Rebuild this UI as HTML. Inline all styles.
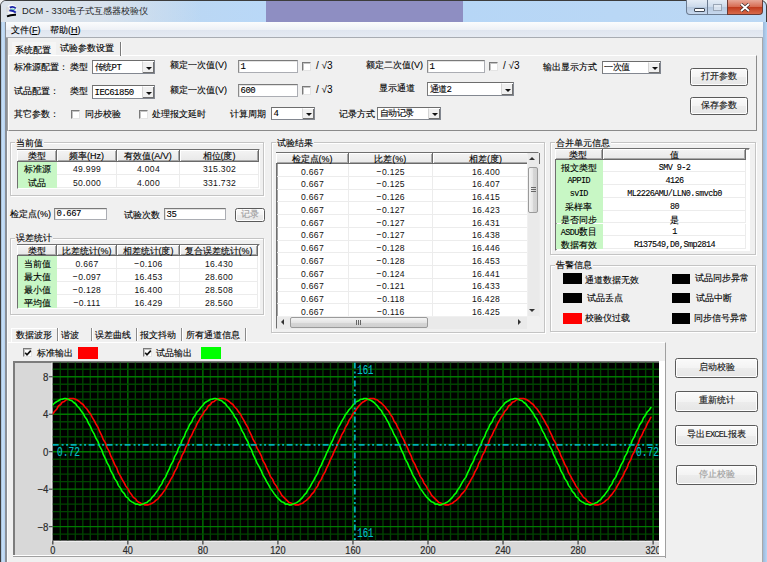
<!DOCTYPE html><html><head><meta charset="utf-8"><style>
*{box-sizing:border-box}
html,body{margin:0;padding:0}
body{width:767px;height:562px;overflow:hidden;position:relative;background:#f0f0f0;font-family:"Liberation Sans",sans-serif;color:#111}
.t{position:absolute;font-size:9px;line-height:10px;margin-top:-5px;white-space:nowrap;color:#000;-webkit-text-stroke:0.12px #000}
.n{position:absolute;font-family:"Liberation Sans",sans-serif;font-size:8.6px;line-height:10px;margin-top:-5px;white-space:nowrap;letter-spacing:0.3px;transform:scaleY(1.15);color:#111}
.m{position:absolute;font-family:"Liberation Mono",sans-serif;font-size:8.5px;line-height:10px;margin-top:-5px;white-space:nowrap;letter-spacing:-0.6px;transform:scaleY(1.15);color:#000;-webkit-text-stroke:0.1px #000}
.m b{font-weight:normal;font-family:"Liberation Sans",sans-serif;font-size:9px;letter-spacing:0}
.edit{position:absolute;background:#fff;border:1px solid #abadb3;border-top-color:#7a7a7a;border-left-color:#8a8a8a;box-shadow:inset 1px 1px 0 #e3e3e3}
.edit span,.combo span{position:absolute;left:1.5px;top:50%;margin-top:-4.5px;font-size:9px;line-height:10px;white-space:nowrap;color:#000;font-family:"Liberation Mono","Liberation Sans",sans-serif;letter-spacing:-0.5px;-webkit-text-stroke:0.1px #000}
.combo{position:absolute;background:#fff;border:1px solid #828790;border-top-color:#6d6d6d;border-left-color:#7a7a7a}
.combo i{position:absolute;right:0;top:0;bottom:0;width:12px;background:#f0f0f0;border-left:1px solid #d4d4d4;border-top:1px solid #fff;box-shadow:inset -1px -1px 0 #707070}
.combo i:after{content:"";position:absolute;left:3px;top:50%;margin-top:-1px;border-left:3px solid transparent;border-right:3px solid transparent;border-top:3px solid #111}
.chk{position:absolute;width:9px;height:9px;background:#fff;border:1px solid #e4e4e4;border-top-color:#7a7a7a;border-left-color:#7a7a7a;box-shadow:inset 1px 1px 0 #c4c4c4}
.chk svg{position:absolute;left:0;top:0}
.btn{position:absolute;text-align:center;font-size:9px;border:1px solid #5a5a5a;border-radius:2.5px;background:linear-gradient(#fafafa,#f3f3f3 50%,#ececec 51%,#e6e6e6);box-shadow:inset 0 0 0 1px #fdfdfd;-webkit-text-stroke:0.15px currentColor}
.btn tt{font-family:'Liberation Mono',monospace;font-size:8.5px;letter-spacing:-0.7px}
.grp{position:absolute;border:1px solid #d5dfe5;border-color:#c0c0c0 #fff #fff #c0c0c0;box-shadow:1px 1px 0 #c0c0c0 inset, -1px -1px 0 #c0c0c0 inset;}
.gt{background:#f0f0f0}

.hc{position:absolute;background:linear-gradient(#f4f4f4,#e8e8e8);border-right:1px solid #6a6a6a;border-bottom:1px solid #6a6a6a;box-shadow:inset 1px 1px 0 #fff,inset -1px -1px 0 #a8a8a8}
.hc span{position:absolute;left:0;right:0;top:50%;margin-top:-4px;text-align:center;font-size:9px;line-height:10px;white-space:nowrap;color:#000;-webkit-text-stroke:0.12px #000}
</style></head><body><div style="position:absolute;left:0;top:0;width:767px;height:600px;border-radius:6px 6px 0 0;background:linear-gradient(90deg,#c9d9ea 0px,#bcd6f0 120px,#b9d8f7 265px,#8e8ec2 265px,#8e8ec2 462px,#b6d6f6 462px,#bcd8f4 767px);border:1px solid #3c3c3c"></div>
<div style="position:absolute;left:1px;top:1px;width:200px;height:21px;border-radius:5px 0 0 0;background:linear-gradient(90deg,#dde3ea,#d8e2ec 50%,rgba(200,220,240,0))"></div>
<div style="position:absolute;left:1px;top:22px;width:4px;height:540px;background:linear-gradient(90deg,#9fb8d2,#c7e0f8 40%,#b4d0ee)"></div>
<div style="position:absolute;left:5px;top:22px;width:2px;height:540px;background:#8a8f96"></div>
<div style="position:absolute;left:763px;top:22px;width:4px;height:540px;background:linear-gradient(90deg,#9cb8d8,#b8d6f6)"></div>
<div style="position:absolute;left:762px;top:22px;width:1px;height:540px;background:#8a8f96"></div>
<svg style="position:absolute;left:0px;top:0px" width="18" height="18" viewBox="0 0 18 18"><ellipse cx="11.5" cy="9.5" rx="5.2" ry="5" fill="#fafafa"/><ellipse cx="7.5" cy="9.5" rx="1.5" ry="3" fill="#c8c8c8" opacity=".6"/><path d="M9.8 7.6 Q13 5.8 15.8 8.4" stroke="#1a24a8" stroke-width="1.9" fill="none"/><path d="M10.5 9.2 Q13 8.6 15.5 10" stroke="#40b8a8" stroke-width="0.9" fill="none"/><path d="M9.3 10.6 Q12.5 10 15.8 12.4" stroke="#1a24a8" stroke-width="1.9" fill="none"/><path d="M7 16.4 Q11 14.6 16 14.8" stroke="#000" stroke-width="1.9" fill="none"/></svg>
<div style="position:absolute;left:22px;top:4px;font-size:9.35px;line-height:14px;color:#1e1e1e;white-space:nowrap;letter-spacing:0px">DCM - 330电子式互感器校验仪</div>
<div style="position:absolute;left:686px;top:0px;width:42px;height:15px;border:1px solid #6b7b90;border-top:none;border-radius:0 0 0 4px;background:linear-gradient(#e4ecf6,#cbd9ea 50%,#b6c8de 51%,#c6d8ee)"></div>
<div style="position:absolute;left:707px;top:0px;width:1px;height:15px;background:#6b7b90"></div>
<div style="position:absolute;left:694px;top:8px;width:11px;height:4px;border:1px solid #404a58;background:#fff;border-radius:1px"></div>
<div style="position:absolute;left:713px;top:4px;width:9px;height:7px;border:1px solid #9aa6b6;background:rgba(255,255,255,.4)"></div>
<div style="position:absolute;left:727px;top:0px;width:36px;height:15px;border:1px solid #6a3a34;border-top:none;border-radius:0 0 4px 0;background:linear-gradient(#e8a898,#d66a50 50%,#c03a1c 51%,#d86a4a)"></div>
<svg style="position:absolute;left:739px;top:3px" width="12" height="9" viewBox="0 0 12 9"><path d="M2 1 L10 8 M10 1 L2 8" stroke="#3a2a2a" stroke-width="3.2"/><path d="M2 1 L10 8 M10 1 L2 8" stroke="#fff" stroke-width="1.8"/></svg>
<div style="position:absolute;left:7px;top:22px;width:756px;height:545px;background:#f0f0f0;border-left:1px solid #fafafa;border-right:1px solid #a8a8a8"></div>
<div style="position:absolute;left:6px;top:22px;width:757px;height:16px;background:linear-gradient(#fbfcfd,#eef1f6 50%,#dfe5ef 51%,#e6ebf3);border-bottom:1px solid #a8acb2"></div>
<div class="t" style="left:11px;top:30px">文件(<u>F</u>)</div>
<div class="t" style="left:50px;top:30px">帮助(<u>H</u>)</div>
<div style="position:absolute;left:8px;top:55px;width:749px;height:76px;border-top:1px solid #fff;border-left:1px solid #fff;border-right:1px solid #8a8a8a;border-bottom:1px solid #8a8a8a"></div>
<div style="position:absolute;left:7px;top:38px;width:1px;height:93px;background:#a0a0a0"></div>
<div style="position:absolute;left:12px;top:42px;width:44px;height:13px;background:#f5f5f5"></div>
<div class="t" style="left:15px;top:50px">系统配置</div>
<div style="position:absolute;left:120px;top:42px;width:2px;height:14px;border-left:1px solid #7a7a7a;border-right:1px solid #fff"></div>
<div class="t" style="left:60px;top:48px">试验参数设置</div>
<div class="t" style="left:14px;top:66.5px;">标准源配置：</div>
<div class="t" style="left:70px;top:66.5px;">类型</div>
<div class="combo" style="left:92px;top:60px;width:63px;height:14px"><span>传统PT</span><i></i></div>
<div class="t" style="left:170px;top:65px;">额定一次值(V)</div>
<div class="edit" style="left:238px;top:60px;width:60px;height:13px"><span>1</span></div>
<div class="chk" style="left:302px;top:62px"></div>
<div class="t" style="left:316px;top:66px;font-size:10px;-webkit-text-stroke:0">/ √3</div>
<div class="t" style="left:366px;top:64.5px;">额定二次值(V)</div>
<div class="edit" style="left:427px;top:60px;width:58px;height:12.5px"><span>1</span></div>
<div class="chk" style="left:489px;top:62px"></div>
<div class="t" style="left:503px;top:66px;font-size:10px;-webkit-text-stroke:0">/ √3</div>
<div class="t" style="left:543px;top:67px;">输出显示方式</div>
<div class="combo" style="left:601.5px;top:60.5px;width:59.5px;height:13.0px"><span>一次值</span><i></i></div>
<div class="btn" style="left:689.5px;top:68px;width:58.5px;height:18px;color:#1a1a1a;line-height:15px">打开参数</div>
<div class="btn" style="left:689.5px;top:97px;width:58.5px;height:18px;color:#1a1a1a;line-height:15px">保存参数</div>
<div class="t" style="left:14px;top:91px;">试品配置：</div>
<div class="t" style="left:70px;top:91px;">类型</div>
<div class="combo" style="left:92px;top:85px;width:63px;height:14px"><span>IEC61850</span><i></i></div>
<div class="t" style="left:170px;top:89.5px;">额定一次值(V)</div>
<div class="edit" style="left:238px;top:84px;width:60px;height:13px"><span>600</span></div>
<div class="chk" style="left:302px;top:86px"></div>
<div class="t" style="left:316px;top:90px;font-size:10px;-webkit-text-stroke:0">/ √3</div>
<div class="t" style="left:379px;top:87.5px;">显示通道</div>
<div class="combo" style="left:427px;top:82px;width:87px;height:14px"><span>通道2</span><i></i></div>
<div class="t" style="left:14px;top:113.5px;">其它参数：</div>
<div class="chk" style="left:71px;top:109.5px"></div>
<div class="t" style="left:84.5px;top:114px;">同步校验</div>
<div class="chk" style="left:139px;top:109.5px"></div>
<div class="t" style="left:152px;top:114px;">处理报文延时</div>
<div class="t" style="left:230px;top:114px;">计算周期</div>
<div class="combo" style="left:271px;top:107px;width:44px;height:13px"><span>4</span><i></i></div>
<div class="t" style="left:339px;top:113.5px;">记录方式</div>
<div class="combo" style="left:377px;top:106.5px;width:64px;height:13.5px"><span>自动记录</span><i></i></div>
<div style="position:absolute;left:11px;top:143px;width:254px;height:53.5px;border:1px solid #fff"></div>
<div style="position:absolute;left:10px;top:142px;width:254px;height:53.5px;border:1px solid #c4c4c4"></div>
<div class="t" style="left:15px;top:142.5px;padding:0 1px;background:#f0f0f0">当前值</div>
<div style="position:absolute;left:17px;top:149px;width:243px;height:40px;background:#fff;border:1px solid #fff;border-left-color:#6f6f6f;border-top-color:#6f6f6f;box-shadow:inset 1px 1px 0 #a0a0a0"></div>
<div class="hc" style="left:17px;top:150px;width:40px;height:11.5px"><span>类型</span></div>
<div class="hc" style="left:57px;top:150px;width:60px;height:11.5px"><span>频率(Hz)</span></div>
<div class="hc" style="left:117px;top:150px;width:63px;height:11.5px"><span>有效值(A/V)</span></div>
<div class="hc" style="left:180px;top:150px;width:79px;height:11.5px"><span>相位(度)</span></div>
<div style="position:absolute;left:18px;top:161.5px;width:39px;height:13.2px;background:#c8f7c5"></div>
<div style="position:absolute;left:57px;top:161.5px;width:60px;height:13.2px;border-right:1px solid #ececec;border-bottom:1px solid #ececec"></div>
<div style="position:absolute;left:117px;top:161.5px;width:63px;height:13.2px;border-right:1px solid #ececec;border-bottom:1px solid #ececec"></div>
<div style="position:absolute;left:180px;top:161.5px;width:79px;height:13.2px;border-right:1px solid #ececec;border-bottom:1px solid #ececec"></div>
<div class="t" style="left:17px;top:169.4px;width:40px;text-align:center;">标准源</div>
<div class="n" style="left:57px;top:169.4px;width:60px;text-align:center;">49.999</div>
<div class="n" style="left:117px;top:169.4px;width:63px;text-align:center;">4.004</div>
<div class="n" style="left:180px;top:169.4px;width:79px;text-align:center;">315.302</div>
<div style="position:absolute;left:18px;top:174.7px;width:39px;height:13.2px;background:#c8f7c5"></div>
<div style="position:absolute;left:57px;top:174.7px;width:60px;height:13.2px;border-right:1px solid #ececec;border-bottom:1px solid #ececec"></div>
<div style="position:absolute;left:117px;top:174.7px;width:63px;height:13.2px;border-right:1px solid #ececec;border-bottom:1px solid #ececec"></div>
<div style="position:absolute;left:180px;top:174.7px;width:79px;height:13.2px;border-right:1px solid #ececec;border-bottom:1px solid #ececec"></div>
<div class="t" style="left:17px;top:182.6px;width:40px;text-align:center;">试品</div>
<div class="n" style="left:57px;top:182.6px;width:60px;text-align:center;">50.000</div>
<div class="n" style="left:117px;top:182.6px;width:63px;text-align:center;">4.000</div>
<div class="n" style="left:180px;top:182.6px;width:79px;text-align:center;">331.732</div>
<div class="t" style="left:10px;top:213.5px;">检定点(%)</div>
<div class="edit" style="left:54px;top:207.5px;width:53px;height:12.0px"><span>0.667</span></div>
<div class="t" style="left:124px;top:214.5px;">试验次数</div>
<div class="edit" style="left:164px;top:208px;width:61.5px;height:12px"><span>35</span></div>
<div class="btn" style="left:234.5px;top:207.5px;width:30.5px;height:14.5px;color:#a0a0a0;line-height:11.5px">记录</div>
<div style="position:absolute;left:11px;top:238.5px;width:254px;height:77.0px;border:1px solid #fff"></div>
<div style="position:absolute;left:10px;top:237.5px;width:254px;height:77.0px;border:1px solid #c4c4c4"></div>
<div class="t" style="left:15px;top:238.0px;padding:0 1px;background:#f0f0f0">误差统计</div>
<div style="position:absolute;left:17px;top:244px;width:243px;height:65px;background:#fff;border:1px solid #fff;border-left-color:#6f6f6f;border-top-color:#6f6f6f;box-shadow:inset 1px 1px 0 #a0a0a0"></div>
<div class="hc" style="left:17px;top:245px;width:40px;height:11px"><span>类型</span></div>
<div class="hc" style="left:57px;top:245px;width:60px;height:11px"><span>比差统计(%)</span></div>
<div class="hc" style="left:117px;top:245px;width:63px;height:11px"><span>相差统计(度)</span></div>
<div class="hc" style="left:180px;top:245px;width:78px;height:11px"><span>复合误差统计(%)</span></div>
<div style="position:absolute;left:18px;top:256px;width:39px;height:13px;background:#c8f7c5"></div>
<div style="position:absolute;left:57px;top:256px;width:60px;height:13px;border-right:1px solid #ececec;border-bottom:1px solid #ececec"></div>
<div style="position:absolute;left:117px;top:256px;width:63px;height:13px;border-right:1px solid #ececec;border-bottom:1px solid #ececec"></div>
<div style="position:absolute;left:180px;top:256px;width:78px;height:13px;border-right:1px solid #ececec;border-bottom:1px solid #ececec"></div>
<div class="t" style="left:17px;top:263.8px;width:40px;text-align:center;">当前值</div>
<div class="n" style="left:57px;top:263.8px;width:60px;text-align:center;">0.667</div>
<div class="n" style="left:117px;top:263.8px;width:63px;text-align:center;">−0.106</div>
<div class="n" style="left:180px;top:263.8px;width:78px;text-align:center;">16.430</div>
<div style="position:absolute;left:18px;top:269px;width:39px;height:13px;background:#c8f7c5"></div>
<div style="position:absolute;left:57px;top:269px;width:60px;height:13px;border-right:1px solid #ececec;border-bottom:1px solid #ececec"></div>
<div style="position:absolute;left:117px;top:269px;width:63px;height:13px;border-right:1px solid #ececec;border-bottom:1px solid #ececec"></div>
<div style="position:absolute;left:180px;top:269px;width:78px;height:13px;border-right:1px solid #ececec;border-bottom:1px solid #ececec"></div>
<div class="t" style="left:17px;top:276.8px;width:40px;text-align:center;">最大值</div>
<div class="n" style="left:57px;top:276.8px;width:60px;text-align:center;">−0.097</div>
<div class="n" style="left:117px;top:276.8px;width:63px;text-align:center;">16.453</div>
<div class="n" style="left:180px;top:276.8px;width:78px;text-align:center;">28.600</div>
<div style="position:absolute;left:18px;top:282px;width:39px;height:13px;background:#c8f7c5"></div>
<div style="position:absolute;left:57px;top:282px;width:60px;height:13px;border-right:1px solid #ececec;border-bottom:1px solid #ececec"></div>
<div style="position:absolute;left:117px;top:282px;width:63px;height:13px;border-right:1px solid #ececec;border-bottom:1px solid #ececec"></div>
<div style="position:absolute;left:180px;top:282px;width:78px;height:13px;border-right:1px solid #ececec;border-bottom:1px solid #ececec"></div>
<div class="t" style="left:17px;top:289.8px;width:40px;text-align:center;">最小值</div>
<div class="n" style="left:57px;top:289.8px;width:60px;text-align:center;">−0.128</div>
<div class="n" style="left:117px;top:289.8px;width:63px;text-align:center;">16.400</div>
<div class="n" style="left:180px;top:289.8px;width:78px;text-align:center;">28.508</div>
<div style="position:absolute;left:18px;top:295px;width:39px;height:13px;background:#c8f7c5"></div>
<div style="position:absolute;left:57px;top:295px;width:60px;height:13px;border-right:1px solid #ececec;border-bottom:1px solid #ececec"></div>
<div style="position:absolute;left:117px;top:295px;width:63px;height:13px;border-right:1px solid #ececec;border-bottom:1px solid #ececec"></div>
<div style="position:absolute;left:180px;top:295px;width:78px;height:13px;border-right:1px solid #ececec;border-bottom:1px solid #ececec"></div>
<div class="t" style="left:17px;top:302.8px;width:40px;text-align:center;">平均值</div>
<div class="n" style="left:57px;top:302.8px;width:60px;text-align:center;">−0.111</div>
<div class="n" style="left:117px;top:302.8px;width:63px;text-align:center;">16.429</div>
<div class="n" style="left:180px;top:302.8px;width:78px;text-align:center;">28.560</div>
<div style="position:absolute;left:271.5px;top:143px;width:274.0px;height:190.5px;border:1px solid #fff"></div>
<div style="position:absolute;left:270.5px;top:142px;width:274.0px;height:190.5px;border:1px solid #c4c4c4"></div>
<div class="t" style="left:275.5px;top:142.5px;padding:0 1px;background:#f0f0f0">试验结果</div>
<div style="position:absolute;left:276px;top:151.5px;width:263px;height:177.5px;background:#fff;border:1px solid #fff;border-left-color:#6f6f6f;border-top-color:#6f6f6f;box-shadow:inset 1px 1px 0 #a0a0a0"></div>
<div class="hc" style="left:276px;top:152.5px;width:73px;height:11.5px"><span>检定点(%)</span></div>
<div class="hc" style="left:349px;top:152.5px;width:83.5px;height:11.5px"><span>比差(%)</span></div>
<div class="hc" style="left:432.5px;top:152.5px;width:107.0px;height:11.5px"><span>相差(度)</span></div>
<div style="position:absolute;left:277px;top:164.0px;width:72px;height:12.75px;border-right:1px solid #ececec;border-bottom:1px solid #ececec"></div>
<div style="position:absolute;left:349px;top:164.0px;width:83.5px;height:12.75px;border-right:1px solid #ececec;border-bottom:1px solid #ececec"></div>
<div style="position:absolute;left:432.5px;top:164.0px;width:107.0px;height:12.75px;border-right:1px solid #ececec;border-bottom:1px solid #ececec"></div>
<div class="n" style="left:276px;top:171.675px;width:73px;text-align:center;">0.667</div>
<div class="n" style="left:349px;top:171.675px;width:83.5px;text-align:center;">−0.125</div>
<div class="n" style="left:432.5px;top:171.675px;width:107.0px;text-align:center;">16.400</div>
<div style="position:absolute;left:277px;top:176.75px;width:72px;height:12.75px;border-right:1px solid #ececec;border-bottom:1px solid #ececec"></div>
<div style="position:absolute;left:349px;top:176.75px;width:83.5px;height:12.75px;border-right:1px solid #ececec;border-bottom:1px solid #ececec"></div>
<div style="position:absolute;left:432.5px;top:176.75px;width:107.0px;height:12.75px;border-right:1px solid #ececec;border-bottom:1px solid #ececec"></div>
<div class="n" style="left:276px;top:184.425px;width:73px;text-align:center;">0.667</div>
<div class="n" style="left:349px;top:184.425px;width:83.5px;text-align:center;">−0.125</div>
<div class="n" style="left:432.5px;top:184.425px;width:107.0px;text-align:center;">16.407</div>
<div style="position:absolute;left:277px;top:189.5px;width:72px;height:12.75px;border-right:1px solid #ececec;border-bottom:1px solid #ececec"></div>
<div style="position:absolute;left:349px;top:189.5px;width:83.5px;height:12.75px;border-right:1px solid #ececec;border-bottom:1px solid #ececec"></div>
<div style="position:absolute;left:432.5px;top:189.5px;width:107.0px;height:12.75px;border-right:1px solid #ececec;border-bottom:1px solid #ececec"></div>
<div class="n" style="left:276px;top:197.175px;width:73px;text-align:center;">0.667</div>
<div class="n" style="left:349px;top:197.175px;width:83.5px;text-align:center;">−0.126</div>
<div class="n" style="left:432.5px;top:197.175px;width:107.0px;text-align:center;">16.415</div>
<div style="position:absolute;left:277px;top:202.25px;width:72px;height:12.75px;border-right:1px solid #ececec;border-bottom:1px solid #ececec"></div>
<div style="position:absolute;left:349px;top:202.25px;width:83.5px;height:12.75px;border-right:1px solid #ececec;border-bottom:1px solid #ececec"></div>
<div style="position:absolute;left:432.5px;top:202.25px;width:107.0px;height:12.75px;border-right:1px solid #ececec;border-bottom:1px solid #ececec"></div>
<div class="n" style="left:276px;top:209.925px;width:73px;text-align:center;">0.667</div>
<div class="n" style="left:349px;top:209.925px;width:83.5px;text-align:center;">−0.127</div>
<div class="n" style="left:432.5px;top:209.925px;width:107.0px;text-align:center;">16.423</div>
<div style="position:absolute;left:277px;top:215.0px;width:72px;height:12.75px;border-right:1px solid #ececec;border-bottom:1px solid #ececec"></div>
<div style="position:absolute;left:349px;top:215.0px;width:83.5px;height:12.75px;border-right:1px solid #ececec;border-bottom:1px solid #ececec"></div>
<div style="position:absolute;left:432.5px;top:215.0px;width:107.0px;height:12.75px;border-right:1px solid #ececec;border-bottom:1px solid #ececec"></div>
<div class="n" style="left:276px;top:222.675px;width:73px;text-align:center;">0.667</div>
<div class="n" style="left:349px;top:222.675px;width:83.5px;text-align:center;">−0.127</div>
<div class="n" style="left:432.5px;top:222.675px;width:107.0px;text-align:center;">16.431</div>
<div style="position:absolute;left:277px;top:227.75px;width:72px;height:12.75px;border-right:1px solid #ececec;border-bottom:1px solid #ececec"></div>
<div style="position:absolute;left:349px;top:227.75px;width:83.5px;height:12.75px;border-right:1px solid #ececec;border-bottom:1px solid #ececec"></div>
<div style="position:absolute;left:432.5px;top:227.75px;width:107.0px;height:12.75px;border-right:1px solid #ececec;border-bottom:1px solid #ececec"></div>
<div class="n" style="left:276px;top:235.425px;width:73px;text-align:center;">0.667</div>
<div class="n" style="left:349px;top:235.425px;width:83.5px;text-align:center;">−0.127</div>
<div class="n" style="left:432.5px;top:235.425px;width:107.0px;text-align:center;">16.438</div>
<div style="position:absolute;left:277px;top:240.5px;width:72px;height:12.75px;border-right:1px solid #ececec;border-bottom:1px solid #ececec"></div>
<div style="position:absolute;left:349px;top:240.5px;width:83.5px;height:12.75px;border-right:1px solid #ececec;border-bottom:1px solid #ececec"></div>
<div style="position:absolute;left:432.5px;top:240.5px;width:107.0px;height:12.75px;border-right:1px solid #ececec;border-bottom:1px solid #ececec"></div>
<div class="n" style="left:276px;top:248.175px;width:73px;text-align:center;">0.667</div>
<div class="n" style="left:349px;top:248.175px;width:83.5px;text-align:center;">−0.128</div>
<div class="n" style="left:432.5px;top:248.175px;width:107.0px;text-align:center;">16.446</div>
<div style="position:absolute;left:277px;top:253.25px;width:72px;height:12.75px;border-right:1px solid #ececec;border-bottom:1px solid #ececec"></div>
<div style="position:absolute;left:349px;top:253.25px;width:83.5px;height:12.75px;border-right:1px solid #ececec;border-bottom:1px solid #ececec"></div>
<div style="position:absolute;left:432.5px;top:253.25px;width:107.0px;height:12.75px;border-right:1px solid #ececec;border-bottom:1px solid #ececec"></div>
<div class="n" style="left:276px;top:260.925px;width:73px;text-align:center;">0.667</div>
<div class="n" style="left:349px;top:260.925px;width:83.5px;text-align:center;">−0.128</div>
<div class="n" style="left:432.5px;top:260.925px;width:107.0px;text-align:center;">16.453</div>
<div style="position:absolute;left:277px;top:266.0px;width:72px;height:12.75px;border-right:1px solid #ececec;border-bottom:1px solid #ececec"></div>
<div style="position:absolute;left:349px;top:266.0px;width:83.5px;height:12.75px;border-right:1px solid #ececec;border-bottom:1px solid #ececec"></div>
<div style="position:absolute;left:432.5px;top:266.0px;width:107.0px;height:12.75px;border-right:1px solid #ececec;border-bottom:1px solid #ececec"></div>
<div class="n" style="left:276px;top:273.675px;width:73px;text-align:center;">0.667</div>
<div class="n" style="left:349px;top:273.675px;width:83.5px;text-align:center;">−0.124</div>
<div class="n" style="left:432.5px;top:273.675px;width:107.0px;text-align:center;">16.441</div>
<div style="position:absolute;left:277px;top:278.75px;width:72px;height:12.75px;border-right:1px solid #ececec;border-bottom:1px solid #ececec"></div>
<div style="position:absolute;left:349px;top:278.75px;width:83.5px;height:12.75px;border-right:1px solid #ececec;border-bottom:1px solid #ececec"></div>
<div style="position:absolute;left:432.5px;top:278.75px;width:107.0px;height:12.75px;border-right:1px solid #ececec;border-bottom:1px solid #ececec"></div>
<div class="n" style="left:276px;top:286.425px;width:73px;text-align:center;">0.667</div>
<div class="n" style="left:349px;top:286.425px;width:83.5px;text-align:center;">−0.121</div>
<div class="n" style="left:432.5px;top:286.425px;width:107.0px;text-align:center;">16.433</div>
<div style="position:absolute;left:277px;top:291.5px;width:72px;height:12.75px;border-right:1px solid #ececec;border-bottom:1px solid #ececec"></div>
<div style="position:absolute;left:349px;top:291.5px;width:83.5px;height:12.75px;border-right:1px solid #ececec;border-bottom:1px solid #ececec"></div>
<div style="position:absolute;left:432.5px;top:291.5px;width:107.0px;height:12.75px;border-right:1px solid #ececec;border-bottom:1px solid #ececec"></div>
<div class="n" style="left:276px;top:299.175px;width:73px;text-align:center;">0.667</div>
<div class="n" style="left:349px;top:299.175px;width:83.5px;text-align:center;">−0.118</div>
<div class="n" style="left:432.5px;top:299.175px;width:107.0px;text-align:center;">16.428</div>
<div style="position:absolute;left:277px;top:304.25px;width:72px;height:12.75px;border-right:1px solid #ececec;border-bottom:1px solid #ececec"></div>
<div style="position:absolute;left:349px;top:304.25px;width:83.5px;height:12.75px;border-right:1px solid #ececec;border-bottom:1px solid #ececec"></div>
<div style="position:absolute;left:432.5px;top:304.25px;width:107.0px;height:12.75px;border-right:1px solid #ececec;border-bottom:1px solid #ececec"></div>
<div class="n" style="left:276px;top:311.925px;width:73px;text-align:center;">0.667</div>
<div class="n" style="left:349px;top:311.925px;width:83.5px;text-align:center;">−0.116</div>
<div class="n" style="left:432.5px;top:311.925px;width:107.0px;text-align:center;">16.425</div>
<div style="position:absolute;left:526.5px;top:152.5px;width:12px;height:163px;background:#eaeaea;border-left:1px solid #f0f0f0"></div>
<div style="position:absolute;left:529px;top:157px;border-left:3px solid transparent;border-right:3px solid transparent;border-bottom:3px solid #333"></div>
<div style="position:absolute;left:528px;top:166.5px;width:10px;height:46px;border:1px solid #9a9a9a;border-radius:2px;background:linear-gradient(90deg,#f4f4f4,#e4e4e4 50%,#d6d6d6 51%,#d0d0d0)"></div>
<div style="position:absolute;left:530.5px;top:187px;width:5px;height:5px;border-top:1px solid #666;border-bottom:1px solid #666"><div style="margin-top:1px;height:1px;background:#666"></div></div>
<div style="position:absolute;left:529px;top:309px;border-left:3px solid transparent;border-right:3px solid transparent;border-top:3px solid #333"></div>
<div style="position:absolute;left:277px;top:315.5px;width:249.5px;height:13px;background:#eaeaea;border-top:1px solid #f0f0f0"></div>
<div style="position:absolute;left:281px;top:319px;border-top:3px solid transparent;border-bottom:3px solid transparent;border-right:3px solid #333"></div>
<div style="position:absolute;left:290px;top:317px;width:138px;height:11px;border:1px solid #9a9a9a;border-radius:2px;background:linear-gradient(#f4f4f4,#e4e4e4 50%,#d6d6d6 51%,#d0d0d0)"></div>
<div style="position:absolute;left:356px;top:319.5px;width:5px;height:5px;border-left:1px solid #666;border-right:1px solid #666"><div style="margin-left:1px;width:1px;height:5px;background:#666"></div></div>
<div style="position:absolute;left:518px;top:319px;border-top:3px solid transparent;border-bottom:3px solid transparent;border-left:3px solid #333"></div>
<div style="position:absolute;left:526.5px;top:315.5px;width:12px;height:13px;background:#f0f0f0"></div>
<div style="position:absolute;left:551px;top:143px;width:206px;height:113px;border:1px solid #fff"></div>
<div style="position:absolute;left:550px;top:142px;width:206px;height:113px;border:1px solid #c4c4c4"></div>
<div class="t" style="left:555px;top:142.5px;padding:0 1px;background:#f0f0f0">合并单元信息</div>
<div style="position:absolute;left:554.5px;top:147.5px;width:195.5px;height:103.5px;background:#fff;border:1px solid #fff;border-left-color:#6f6f6f;border-top-color:#6f6f6f;box-shadow:inset 1px 1px 0 #a0a0a0"></div>
<div class="hc" style="left:554.5px;top:148.5px;width:48.5px;height:11.0px"><span>类型</span></div>
<div class="hc" style="left:603px;top:148.5px;width:143px;height:11.0px"><span>值</span></div>
<div style="position:absolute;left:555.5px;top:159.5px;width:47.5px;height:12.8px;background:#c8f7c5"></div>
<div style="position:absolute;left:603px;top:159.5px;width:143px;height:12.8px;border-right:1px solid #ececec;border-bottom:1px solid #ececec"></div>
<div class="t" style="left:554.5px;top:168.3px;width:48.5px;text-align:center;">报文类型</div>
<div class="m" style="left:603px;top:168.3px;width:143px;text-align:center;">SMV 9-2</div>
<div style="position:absolute;left:555.5px;top:172.3px;width:47.5px;height:12.8px;background:#c8f7c5"></div>
<div style="position:absolute;left:603px;top:172.3px;width:143px;height:12.8px;border-right:1px solid #ececec;border-bottom:1px solid #ececec"></div>
<div class="m" style="left:554.5px;top:181.10000000000002px;width:48.5px;text-align:center;">APPID</div>
<div class="m" style="left:603px;top:181.10000000000002px;width:143px;text-align:center;">4126</div>
<div style="position:absolute;left:555.5px;top:185.1px;width:47.5px;height:12.8px;background:#c8f7c5"></div>
<div style="position:absolute;left:603px;top:185.1px;width:143px;height:12.8px;border-right:1px solid #ececec;border-bottom:1px solid #ececec"></div>
<div class="m" style="left:554.5px;top:193.9px;width:48.5px;text-align:center;">svID</div>
<div class="m" style="left:603px;top:193.9px;width:143px;text-align:center;">ML2226AMU/LLN0.smvcb0</div>
<div style="position:absolute;left:555.5px;top:197.9px;width:47.5px;height:12.8px;background:#c8f7c5"></div>
<div style="position:absolute;left:603px;top:197.9px;width:143px;height:12.8px;border-right:1px solid #ececec;border-bottom:1px solid #ececec"></div>
<div class="t" style="left:554.5px;top:206.70000000000002px;width:48.5px;text-align:center;">采样率</div>
<div class="m" style="left:603px;top:206.70000000000002px;width:143px;text-align:center;">80</div>
<div style="position:absolute;left:555.5px;top:210.7px;width:47.5px;height:12.8px;background:#c8f7c5"></div>
<div style="position:absolute;left:603px;top:210.7px;width:143px;height:12.8px;border-right:1px solid #ececec;border-bottom:1px solid #ececec"></div>
<div class="t" style="left:554.5px;top:219.5px;width:48.5px;text-align:center;">是否同步</div>
<div class="t" style="left:603px;top:219.5px;width:143px;text-align:center;">是</div>
<div style="position:absolute;left:555.5px;top:223.5px;width:47.5px;height:12.8px;background:#c8f7c5"></div>
<div style="position:absolute;left:603px;top:223.5px;width:143px;height:12.8px;border-right:1px solid #ececec;border-bottom:1px solid #ececec"></div>
<div class="m" style="left:554.5px;top:232.3px;width:48.5px;text-align:center;">ASDU<b>数目</b></div>
<div class="m" style="left:603px;top:232.3px;width:143px;text-align:center;">1</div>
<div style="position:absolute;left:555.5px;top:236.3px;width:47.5px;height:12.8px;background:#c8f7c5"></div>
<div style="position:absolute;left:603px;top:236.3px;width:143px;height:12.8px;border-right:1px solid #ececec;border-bottom:1px solid #ececec"></div>
<div class="t" style="left:554.5px;top:245.10000000000002px;width:48.5px;text-align:center;">数据有效</div>
<div class="m" style="left:603px;top:245.10000000000002px;width:143px;text-align:center;">R137549,D0,Smp2814</div>
<div style="position:absolute;left:551px;top:265.5px;width:206px;height:67.5px;border:1px solid #fff"></div>
<div style="position:absolute;left:550px;top:264.5px;width:206px;height:67.5px;border:1px solid #c4c4c4"></div>
<div class="t" style="left:555px;top:265.0px;padding:0 1px;background:#f0f0f0">告警信息</div>
<div style="position:absolute;left:563px;top:273px;width:18.5px;height:10.5px;background:#000"></div>
<div class="t" style="left:585px;top:280px;">通道数据无效</div>
<div style="position:absolute;left:563px;top:292.5px;width:18.5px;height:10.5px;background:#000"></div>
<div class="t" style="left:587px;top:298px;">试品丢点</div>
<div style="position:absolute;left:563px;top:312.5px;width:18.5px;height:11.0px;background:#f00"></div>
<div class="t" style="left:585px;top:317.5px;">校验仪过载</div>
<div style="position:absolute;left:672px;top:273.5px;width:18px;height:10.5px;background:#000"></div>
<div class="t" style="left:695px;top:277.5px;">试品同步异常</div>
<div style="position:absolute;left:672px;top:292.5px;width:18px;height:10.5px;background:#000"></div>
<div class="t" style="left:696px;top:298px;">试品中断</div>
<div style="position:absolute;left:672px;top:313px;width:18px;height:10.5px;background:#000"></div>
<div class="t" style="left:694px;top:318px;">同步信号异常</div>
<div class="t" style="left:15.5px;top:335.3px;font-size:9.4px">数据波形</div>
<div style="position:absolute;left:56.5px;top:328px;width:2px;height:13px;border-left:1px solid #8a8a8a;border-right:1px solid #fff"></div>
<div class="t" style="left:61.0px;top:335.3px;font-size:9.4px">谐波</div>
<div style="position:absolute;left:90.5px;top:328px;width:2px;height:13px;border-left:1px solid #8a8a8a;border-right:1px solid #fff"></div>
<div class="t" style="left:95.0px;top:335.3px;font-size:9.4px">误差曲线</div>
<div style="position:absolute;left:135.5px;top:328px;width:2px;height:13px;border-left:1px solid #8a8a8a;border-right:1px solid #fff"></div>
<div class="t" style="left:140.0px;top:335.3px;font-size:9.4px">报文抖动</div>
<div style="position:absolute;left:181px;top:328px;width:2px;height:13px;border-left:1px solid #8a8a8a;border-right:1px solid #fff"></div>
<div class="t" style="left:185.5px;top:335.3px;font-size:9.4px">所有通道信息</div>
<div style="position:absolute;left:244.5px;top:328px;width:2px;height:13px;border-left:1px solid #8a8a8a;border-right:1px solid #fff"></div>
<div style="position:absolute;left:11px;top:328px;width:46px;height:14px;border-top:1px solid #fff;border-left:1px solid #fff"></div>
<div class="chk" style="left:23px;top:348px"><svg width="8" height="8" viewBox="0 0 8 8"><path d="M1.2 3.8 L3 5.8 L6.8 1.6" stroke="#111" stroke-width="1.7" fill="none"/></svg></div>
<div class="t" style="left:37px;top:352.5px;">标准输出</div>
<div style="position:absolute;left:77.5px;top:347px;width:20.5px;height:11.5px;background:#ff0000"></div>
<div class="chk" style="left:143px;top:348px"><svg width="8" height="8" viewBox="0 0 8 8"><path d="M1.2 3.8 L3 5.8 L6.8 1.6" stroke="#111" stroke-width="1.7" fill="none"/></svg></div>
<div class="t" style="left:156px;top:352.5px;">试品输出</div>
<div style="position:absolute;left:201px;top:347px;width:20px;height:11.5px;background:#00ff00"></div>
<div style="position:absolute;left:8px;top:341.5px;width:658px;height:216px;border-top:1px solid #fff;border-right:1px solid #a0a0a0"></div>
<div style="position:absolute;left:13px;top:361px;width:653px;height:196px;background:#fff;border-right:1px solid #a0a0a0;border-bottom:1px solid #a0a0a0"></div>
<div style="position:absolute;left:13px;top:361px;width:646px;height:194px;background:#d8d8d8;border-left:2px solid #7c7c7c;border-top:2px solid #7c7c7c"></div>
<svg style="position:absolute;left:0;top:0" width="767" height="562" viewBox="0 0 767 562"><defs><clipPath id="pc"><rect x="52.60" y="362.60" width="606.40" height="178.00"/></clipPath><clipPath id="lc"><rect x="14" y="363" width="645.00" height="193"/></clipPath></defs><rect x="51.4" y="362.6" width="607.6" height="179.2" fill="#f4f4f4"/><rect x="52.6" y="362.6" width="606.4" height="178.0" fill="#000"/><g clip-path="url(#pc)"><line x1="60.30" y1="362.6" x2="60.30" y2="540.6" stroke="#004400" stroke-width="1.35"/><line x1="67.81" y1="362.6" x2="67.81" y2="540.6" stroke="#004400" stroke-width="1.35"/><line x1="75.31" y1="362.6" x2="75.31" y2="540.6" stroke="#004400" stroke-width="1.35"/><line x1="82.82" y1="362.6" x2="82.82" y2="540.6" stroke="#004400" stroke-width="1.35"/><line x1="90.32" y1="362.6" x2="90.32" y2="540.6" stroke="#004400" stroke-width="1.35"/><line x1="97.82" y1="362.6" x2="97.82" y2="540.6" stroke="#004400" stroke-width="1.35"/><line x1="105.33" y1="362.6" x2="105.33" y2="540.6" stroke="#004400" stroke-width="1.35"/><line x1="112.83" y1="362.6" x2="112.83" y2="540.6" stroke="#004400" stroke-width="1.35"/><line x1="120.34" y1="362.6" x2="120.34" y2="540.6" stroke="#004400" stroke-width="1.35"/><line x1="127.84" y1="362.6" x2="127.84" y2="540.6" stroke="#007800" stroke-width="1.35"/><line x1="135.34" y1="362.6" x2="135.34" y2="540.6" stroke="#004400" stroke-width="1.35"/><line x1="142.85" y1="362.6" x2="142.85" y2="540.6" stroke="#004400" stroke-width="1.35"/><line x1="150.35" y1="362.6" x2="150.35" y2="540.6" stroke="#004400" stroke-width="1.35"/><line x1="157.86" y1="362.6" x2="157.86" y2="540.6" stroke="#004400" stroke-width="1.35"/><line x1="165.36" y1="362.6" x2="165.36" y2="540.6" stroke="#004400" stroke-width="1.35"/><line x1="172.86" y1="362.6" x2="172.86" y2="540.6" stroke="#004400" stroke-width="1.35"/><line x1="180.37" y1="362.6" x2="180.37" y2="540.6" stroke="#004400" stroke-width="1.35"/><line x1="187.87" y1="362.6" x2="187.87" y2="540.6" stroke="#004400" stroke-width="1.35"/><line x1="195.38" y1="362.6" x2="195.38" y2="540.6" stroke="#004400" stroke-width="1.35"/><line x1="202.88" y1="362.6" x2="202.88" y2="540.6" stroke="#007800" stroke-width="1.35"/><line x1="210.38" y1="362.6" x2="210.38" y2="540.6" stroke="#004400" stroke-width="1.35"/><line x1="217.89" y1="362.6" x2="217.89" y2="540.6" stroke="#004400" stroke-width="1.35"/><line x1="225.39" y1="362.6" x2="225.39" y2="540.6" stroke="#004400" stroke-width="1.35"/><line x1="232.90" y1="362.6" x2="232.90" y2="540.6" stroke="#004400" stroke-width="1.35"/><line x1="240.40" y1="362.6" x2="240.40" y2="540.6" stroke="#004400" stroke-width="1.35"/><line x1="247.90" y1="362.6" x2="247.90" y2="540.6" stroke="#004400" stroke-width="1.35"/><line x1="255.41" y1="362.6" x2="255.41" y2="540.6" stroke="#004400" stroke-width="1.35"/><line x1="262.91" y1="362.6" x2="262.91" y2="540.6" stroke="#004400" stroke-width="1.35"/><line x1="270.42" y1="362.6" x2="270.42" y2="540.6" stroke="#004400" stroke-width="1.35"/><line x1="277.92" y1="362.6" x2="277.92" y2="540.6" stroke="#007800" stroke-width="1.35"/><line x1="285.42" y1="362.6" x2="285.42" y2="540.6" stroke="#004400" stroke-width="1.35"/><line x1="292.93" y1="362.6" x2="292.93" y2="540.6" stroke="#004400" stroke-width="1.35"/><line x1="300.43" y1="362.6" x2="300.43" y2="540.6" stroke="#004400" stroke-width="1.35"/><line x1="307.94" y1="362.6" x2="307.94" y2="540.6" stroke="#004400" stroke-width="1.35"/><line x1="315.44" y1="362.6" x2="315.44" y2="540.6" stroke="#004400" stroke-width="1.35"/><line x1="322.94" y1="362.6" x2="322.94" y2="540.6" stroke="#004400" stroke-width="1.35"/><line x1="330.45" y1="362.6" x2="330.45" y2="540.6" stroke="#004400" stroke-width="1.35"/><line x1="337.95" y1="362.6" x2="337.95" y2="540.6" stroke="#004400" stroke-width="1.35"/><line x1="345.46" y1="362.6" x2="345.46" y2="540.6" stroke="#004400" stroke-width="1.35"/><line x1="352.96" y1="362.6" x2="352.96" y2="540.6" stroke="#007800" stroke-width="1.35"/><line x1="360.46" y1="362.6" x2="360.46" y2="540.6" stroke="#004400" stroke-width="1.35"/><line x1="367.97" y1="362.6" x2="367.97" y2="540.6" stroke="#004400" stroke-width="1.35"/><line x1="375.47" y1="362.6" x2="375.47" y2="540.6" stroke="#004400" stroke-width="1.35"/><line x1="382.98" y1="362.6" x2="382.98" y2="540.6" stroke="#004400" stroke-width="1.35"/><line x1="390.48" y1="362.6" x2="390.48" y2="540.6" stroke="#004400" stroke-width="1.35"/><line x1="397.98" y1="362.6" x2="397.98" y2="540.6" stroke="#004400" stroke-width="1.35"/><line x1="405.49" y1="362.6" x2="405.49" y2="540.6" stroke="#004400" stroke-width="1.35"/><line x1="412.99" y1="362.6" x2="412.99" y2="540.6" stroke="#004400" stroke-width="1.35"/><line x1="420.50" y1="362.6" x2="420.50" y2="540.6" stroke="#004400" stroke-width="1.35"/><line x1="428.00" y1="362.6" x2="428.00" y2="540.6" stroke="#007800" stroke-width="1.35"/><line x1="435.50" y1="362.6" x2="435.50" y2="540.6" stroke="#004400" stroke-width="1.35"/><line x1="443.01" y1="362.6" x2="443.01" y2="540.6" stroke="#004400" stroke-width="1.35"/><line x1="450.51" y1="362.6" x2="450.51" y2="540.6" stroke="#004400" stroke-width="1.35"/><line x1="458.02" y1="362.6" x2="458.02" y2="540.6" stroke="#004400" stroke-width="1.35"/><line x1="465.52" y1="362.6" x2="465.52" y2="540.6" stroke="#004400" stroke-width="1.35"/><line x1="473.02" y1="362.6" x2="473.02" y2="540.6" stroke="#004400" stroke-width="1.35"/><line x1="480.53" y1="362.6" x2="480.53" y2="540.6" stroke="#004400" stroke-width="1.35"/><line x1="488.03" y1="362.6" x2="488.03" y2="540.6" stroke="#004400" stroke-width="1.35"/><line x1="495.54" y1="362.6" x2="495.54" y2="540.6" stroke="#004400" stroke-width="1.35"/><line x1="503.04" y1="362.6" x2="503.04" y2="540.6" stroke="#007800" stroke-width="1.35"/><line x1="510.54" y1="362.6" x2="510.54" y2="540.6" stroke="#004400" stroke-width="1.35"/><line x1="518.05" y1="362.6" x2="518.05" y2="540.6" stroke="#004400" stroke-width="1.35"/><line x1="525.55" y1="362.6" x2="525.55" y2="540.6" stroke="#004400" stroke-width="1.35"/><line x1="533.06" y1="362.6" x2="533.06" y2="540.6" stroke="#004400" stroke-width="1.35"/><line x1="540.56" y1="362.6" x2="540.56" y2="540.6" stroke="#004400" stroke-width="1.35"/><line x1="548.06" y1="362.6" x2="548.06" y2="540.6" stroke="#004400" stroke-width="1.35"/><line x1="555.57" y1="362.6" x2="555.57" y2="540.6" stroke="#004400" stroke-width="1.35"/><line x1="563.07" y1="362.6" x2="563.07" y2="540.6" stroke="#004400" stroke-width="1.35"/><line x1="570.58" y1="362.6" x2="570.58" y2="540.6" stroke="#004400" stroke-width="1.35"/><line x1="578.08" y1="362.6" x2="578.08" y2="540.6" stroke="#007800" stroke-width="1.35"/><line x1="585.58" y1="362.6" x2="585.58" y2="540.6" stroke="#004400" stroke-width="1.35"/><line x1="593.09" y1="362.6" x2="593.09" y2="540.6" stroke="#004400" stroke-width="1.35"/><line x1="600.59" y1="362.6" x2="600.59" y2="540.6" stroke="#004400" stroke-width="1.35"/><line x1="608.10" y1="362.6" x2="608.10" y2="540.6" stroke="#004400" stroke-width="1.35"/><line x1="615.60" y1="362.6" x2="615.60" y2="540.6" stroke="#004400" stroke-width="1.35"/><line x1="623.10" y1="362.6" x2="623.10" y2="540.6" stroke="#004400" stroke-width="1.35"/><line x1="630.61" y1="362.6" x2="630.61" y2="540.6" stroke="#004400" stroke-width="1.35"/><line x1="638.11" y1="362.6" x2="638.11" y2="540.6" stroke="#004400" stroke-width="1.35"/><line x1="645.62" y1="362.6" x2="645.62" y2="540.6" stroke="#004400" stroke-width="1.35"/><line x1="653.12" y1="362.6" x2="653.12" y2="540.6" stroke="#007800" stroke-width="1.35"/><line x1="52.6" y1="534.16" x2="659.0" y2="534.16" stroke="#004400" stroke-width="1.35"/><line x1="52.6" y1="526.66" x2="659.0" y2="526.66" stroke="#007800" stroke-width="1.35"/><line x1="52.6" y1="519.16" x2="659.0" y2="519.16" stroke="#004400" stroke-width="1.35"/><line x1="52.6" y1="511.67" x2="659.0" y2="511.67" stroke="#004400" stroke-width="1.35"/><line x1="52.6" y1="504.17" x2="659.0" y2="504.17" stroke="#004400" stroke-width="1.35"/><line x1="52.6" y1="496.68" x2="659.0" y2="496.68" stroke="#004400" stroke-width="1.35"/><line x1="52.6" y1="489.18" x2="659.0" y2="489.18" stroke="#007800" stroke-width="1.35"/><line x1="52.6" y1="481.68" x2="659.0" y2="481.68" stroke="#004400" stroke-width="1.35"/><line x1="52.6" y1="474.19" x2="659.0" y2="474.19" stroke="#004400" stroke-width="1.35"/><line x1="52.6" y1="466.69" x2="659.0" y2="466.69" stroke="#004400" stroke-width="1.35"/><line x1="52.6" y1="459.20" x2="659.0" y2="459.20" stroke="#004400" stroke-width="1.35"/><line x1="52.6" y1="451.70" x2="659.0" y2="451.70" stroke="#007800" stroke-width="1.35"/><line x1="52.6" y1="444.20" x2="659.0" y2="444.20" stroke="#004400" stroke-width="1.35"/><line x1="52.6" y1="436.71" x2="659.0" y2="436.71" stroke="#004400" stroke-width="1.35"/><line x1="52.6" y1="429.21" x2="659.0" y2="429.21" stroke="#004400" stroke-width="1.35"/><line x1="52.6" y1="421.72" x2="659.0" y2="421.72" stroke="#004400" stroke-width="1.35"/><line x1="52.6" y1="414.22" x2="659.0" y2="414.22" stroke="#007800" stroke-width="1.35"/><line x1="52.6" y1="406.72" x2="659.0" y2="406.72" stroke="#004400" stroke-width="1.35"/><line x1="52.6" y1="399.23" x2="659.0" y2="399.23" stroke="#004400" stroke-width="1.35"/><line x1="52.6" y1="391.73" x2="659.0" y2="391.73" stroke="#004400" stroke-width="1.35"/><line x1="52.6" y1="384.24" x2="659.0" y2="384.24" stroke="#004400" stroke-width="1.35"/><line x1="52.6" y1="376.74" x2="659.0" y2="376.74" stroke="#007800" stroke-width="1.35"/><line x1="52.6" y1="369.24" x2="659.0" y2="369.24" stroke="#004400" stroke-width="1.35"/><line x1="52.6" y1="361.75" x2="659.0" y2="361.75" stroke="#004400" stroke-width="1.35"/><polyline points="52.43,414.21 54.68,411.21 56.93,408.97 58.42,405.97 60.67,404.47 62.17,402.23 64.42,401.48 65.91,399.98 68.16,399.23 69.66,398.48 71.91,398.48 73.40,398.48 75.65,399.23 77.15,399.98 79.40,401.48 80.89,402.97 83.14,404.47 84.64,406.72 86.89,408.97 88.38,411.21 90.63,414.21 92.13,417.21 94.38,420.95 95.88,423.95 98.12,427.69 99.62,431.44 101.87,435.93 103.37,439.68 105.61,443.42 107.11,447.92 109.36,451.66 110.86,456.16 113.10,460.65 114.60,464.39 116.85,468.14 118.35,472.63 120.59,476.38 122.09,479.38 124.34,483.12 125.84,486.12 128.08,489.11 129.58,492.11 131.83,495.10 133.33,497.35 135.57,498.85 137.07,501.10 139.32,502.59 140.82,503.34 143.06,504.09 144.56,504.84 146.81,504.84 148.31,504.84 150.55,504.09 152.05,503.34 154.30,501.85 155.80,500.35 158.04,498.85 159.54,496.60 161.79,494.36 163.29,492.11 165.53,489.11 167.03,486.12 169.28,482.37 170.78,479.38 173.02,475.63 174.52,471.88 176.77,468.14 178.27,463.65 180.51,459.90 182.01,455.41 184.26,451.66 185.76,447.17 188.00,443.42 189.50,438.93 191.75,435.18 193.25,431.44 195.50,427.69 196.99,423.95 199.24,420.20 200.74,417.21 202.99,414.21 204.48,411.21 206.73,408.97 208.23,405.97 210.48,404.47 211.97,402.23 214.22,401.48 215.72,399.98 217.97,399.23 219.46,398.48 221.71,398.48 223.21,398.48 225.46,399.23 226.95,399.98 229.20,401.48 230.70,402.97 232.95,404.47 234.44,406.72 236.69,408.97 238.19,411.21 240.44,414.21 241.93,417.21 244.18,420.95 245.68,423.95 247.93,427.69 249.42,431.44 251.67,435.93 253.17,439.68 255.42,443.42 256.92,447.92 259.16,451.66 261.41,456.16 262.91,460.65 265.15,464.39 266.65,468.14 268.90,472.63 270.40,476.38 272.64,479.38 274.14,483.12 276.39,486.12 277.89,489.11 280.13,492.11 281.63,495.10 283.88,497.35 285.38,498.85 287.62,501.10 289.12,502.59 291.37,503.34 292.87,504.09 295.12,504.84 296.61,504.84 298.86,504.84 300.36,504.09 302.61,503.34 304.10,501.85 306.35,500.35 307.85,498.85 310.10,496.60 311.59,494.36 313.84,492.11 315.34,489.11 317.59,486.12 319.08,482.37 321.33,479.38 322.83,475.63 325.08,471.88 326.57,468.14 328.82,463.65 330.32,459.90 332.57,455.41 334.06,451.66 336.31,447.17 337.81,443.42 340.06,438.93 341.55,435.18 343.80,431.44 345.30,427.69 347.55,423.95 349.04,420.20 351.29,417.21 352.79,414.21 355.04,411.21 356.54,408.97 358.78,405.97 360.28,404.47 362.53,402.23 364.03,401.48 366.27,399.98 367.77,399.23 370.02,398.48 371.52,398.48 373.76,398.48 375.26,399.23 377.51,399.98 379.01,401.48 381.25,402.97 382.75,404.47 385.00,406.72 386.50,408.97 388.74,411.21 390.24,414.21 392.49,417.21 393.99,420.95 396.23,423.95 397.73,427.69 399.98,431.44 401.48,435.93 403.72,439.68 405.22,443.42 407.47,447.92 408.97,451.66 411.21,456.16 412.71,460.65 414.96,464.39 416.46,468.14 418.70,472.63 420.20,476.38 422.45,479.38 423.95,483.12 426.19,486.12 427.69,489.11 429.94,492.11 431.44,495.10 433.68,497.35 435.18,498.85 437.43,501.10 438.93,502.59 441.17,503.34 442.67,504.09 444.92,504.84 446.42,504.84 448.67,504.84 450.16,504.09 452.41,503.34 453.91,501.85 456.16,500.35 457.65,498.85 459.90,496.60 461.40,494.36 463.65,492.11 465.89,489.11 467.39,486.12 469.64,482.37 471.14,479.38 473.38,475.63 474.88,471.88 477.13,468.14 478.63,463.65 480.87,459.90 482.37,455.41 484.62,451.66 486.12,447.17 488.36,443.42 489.86,438.93 492.11,435.18 493.61,431.44 495.85,427.69 497.35,423.95 499.60,420.20 501.10,417.21 503.34,414.21 504.84,411.21 507.09,408.97 508.59,405.97 510.83,404.47 512.33,402.23 514.58,401.48 516.08,399.98 518.32,399.23 519.82,398.48 522.07,398.48 523.57,398.48 525.81,399.23 527.31,399.98 529.56,401.48 531.06,402.97 533.30,404.47 534.80,406.72 537.05,408.97 538.55,411.21 540.79,414.21 542.29,417.21 544.54,420.95 546.04,423.95 548.29,427.69 549.78,431.44 552.03,435.93 553.53,439.68 555.78,443.42 557.27,447.92 559.52,451.66 561.02,456.16 563.27,460.65 564.76,464.39 567.01,468.14 568.51,472.63 570.76,476.38 572.25,479.38 574.50,483.12 576.00,486.12 578.25,489.11 579.74,492.11 581.99,495.10 583.49,497.35 585.74,498.85 587.23,501.10 589.48,502.59 590.98,503.34 593.23,504.09 594.72,504.84 596.97,504.84 598.47,504.84 600.72,504.09 602.21,503.34 604.46,501.85 605.96,500.35 608.21,498.85 609.71,496.60 611.95,494.36 613.45,492.11 615.70,489.11 617.20,486.12 619.44,482.37 620.94,479.38 623.19,475.63 624.69,471.88 626.93,468.14 628.43,463.65 630.68,459.90 632.18,455.41 634.42,451.66 635.92,447.17 638.17,443.42 639.67,438.93 641.91,435.18 643.41,431.44 645.66,427.69 647.16,423.95 649.40,420.20 650.90,417.21" fill="none" stroke="#ff0000" stroke-width="1.6" stroke-linejoin="round" stroke-linecap="round"/><polyline points="52.43,405.22 54.68,402.97 56.93,401.48 58.42,400.73 60.67,399.23 62.17,399.23 64.42,398.48 65.91,398.48 68.16,399.23 69.66,399.98 71.91,400.73 73.40,402.23 75.65,403.72 77.15,405.97 79.40,408.22 80.89,410.46 83.14,413.46 84.64,416.46 86.89,419.45 88.38,423.20 90.63,426.94 92.13,430.69 94.38,434.43 95.88,438.18 98.12,441.92 99.62,446.42 101.87,450.16 103.37,454.66 105.61,459.15 107.11,462.90 109.36,466.64 110.86,471.14 113.10,474.88 114.60,478.63 116.85,481.62 118.35,485.37 120.59,488.36 122.09,491.36 124.34,493.61 125.84,496.60 128.08,498.10 129.58,500.35 131.83,501.85 133.33,502.59 135.57,504.09 137.07,504.09 139.32,504.84 140.82,504.84 143.06,504.09 144.56,503.34 146.81,502.59 148.31,501.10 150.55,499.60 152.05,497.35 154.30,495.10 155.80,492.86 158.04,489.86 159.54,486.87 161.79,483.87 163.29,480.12 165.53,477.13 167.03,473.38 169.28,468.89 170.78,465.14 173.02,461.40 174.52,456.90 176.77,453.16 178.27,448.67 180.51,444.92 182.01,440.43 184.26,436.68 185.76,432.19 188.00,428.44 189.50,424.70 191.75,421.70 193.25,417.96 195.50,414.96 196.99,411.96 199.24,409.72 200.74,407.47 202.99,405.22 204.48,402.97 206.73,401.48 208.23,400.73 210.48,399.23 211.97,399.23 214.22,398.48 215.72,398.48 217.97,399.23 219.46,399.98 221.71,400.73 223.21,402.23 225.46,403.72 226.95,405.97 229.20,408.22 230.70,410.46 232.95,413.46 234.44,416.46 236.69,419.45 238.19,423.20 240.44,426.94 241.93,430.69 244.18,434.43 245.68,438.18 247.93,441.92 249.42,446.42 251.67,450.16 253.17,454.66 255.42,459.15 256.92,462.90 259.16,466.64 261.41,471.14 262.91,474.88 265.15,478.63 266.65,481.62 268.90,485.37 270.40,488.36 272.64,491.36 274.14,493.61 276.39,496.60 277.89,498.10 280.13,500.35 281.63,501.85 283.88,502.59 285.38,504.09 287.62,504.09 289.12,504.84 291.37,504.84 292.87,504.09 295.12,503.34 296.61,502.59 298.86,501.10 300.36,499.60 302.61,497.35 304.10,495.10 306.35,492.86 307.85,489.86 310.10,486.87 311.59,483.87 313.84,480.12 315.34,477.13 317.59,473.38 319.08,468.89 321.33,465.14 322.83,461.40 325.08,456.90 326.57,453.16 328.82,448.67 330.32,444.92 332.57,440.43 334.06,436.68 336.31,432.19 337.81,428.44 340.06,424.70 341.55,421.70 343.80,417.96 345.30,414.96 347.55,411.96 349.04,409.72 351.29,407.47 352.79,405.22 355.04,402.97 356.54,401.48 358.78,400.73 360.28,399.23 362.53,399.23 364.03,398.48 366.27,398.48 367.77,399.23 370.02,399.98 371.52,400.73 373.76,402.23 375.26,403.72 377.51,405.97 379.01,408.22 381.25,410.46 382.75,413.46 385.00,416.46 386.50,419.45 388.74,423.20 390.24,426.94 392.49,430.69 393.99,434.43 396.23,438.18 397.73,441.92 399.98,446.42 401.48,450.16 403.72,454.66 405.22,459.15 407.47,462.90 408.97,466.64 411.21,471.14 412.71,474.88 414.96,478.63 416.46,481.62 418.70,485.37 420.20,488.36 422.45,491.36 423.95,493.61 426.19,496.60 427.69,498.10 429.94,500.35 431.44,501.85 433.68,502.59 435.18,504.09 437.43,504.09 438.93,504.84 441.17,504.84 442.67,504.09 444.92,503.34 446.42,502.59 448.67,501.10 450.16,499.60 452.41,497.35 453.91,495.10 456.16,492.86 457.65,489.86 459.90,486.87 461.40,483.87 463.65,480.12 465.89,477.13 467.39,473.38 469.64,468.89 471.14,465.14 473.38,461.40 474.88,456.90 477.13,453.16 478.63,448.67 480.87,444.92 482.37,440.43 484.62,436.68 486.12,432.19 488.36,428.44 489.86,424.70 492.11,421.70 493.61,417.96 495.85,414.96 497.35,411.96 499.60,409.72 501.10,407.47 503.34,405.22 504.84,402.97 507.09,401.48 508.59,400.73 510.83,399.23 512.33,399.23 514.58,398.48 516.08,398.48 518.32,399.23 519.82,399.98 522.07,400.73 523.57,402.23 525.81,403.72 527.31,405.97 529.56,408.22 531.06,410.46 533.30,413.46 534.80,416.46 537.05,419.45 538.55,423.20 540.79,426.94 542.29,430.69 544.54,434.43 546.04,438.18 548.29,441.92 549.78,446.42 552.03,450.16 553.53,454.66 555.78,459.15 557.27,462.90 559.52,466.64 561.02,471.14 563.27,474.88 564.76,478.63 567.01,481.62 568.51,485.37 570.76,488.36 572.25,491.36 574.50,493.61 576.00,496.60 578.25,498.10 579.74,500.35 581.99,501.85 583.49,502.59 585.74,504.09 587.23,504.09 589.48,504.84 590.98,504.84 593.23,504.09 594.72,503.34 596.97,502.59 598.47,501.10 600.72,499.60 602.21,497.35 604.46,495.10 605.96,492.86 608.21,489.86 609.71,486.87 611.95,483.87 613.45,480.12 615.70,477.13 617.20,473.38 619.44,468.89 620.94,465.14 623.19,461.40 624.69,456.90 626.93,453.16 628.43,448.67 630.68,444.92 632.18,440.43 634.42,436.68 635.92,432.19 638.17,428.44 639.67,424.70 641.91,421.70 643.41,417.96 645.66,414.96 647.16,411.96 649.40,409.72 650.90,407.47" fill="none" stroke="#00ff00" stroke-width="1.6" stroke-linejoin="round" stroke-linecap="round"/><line x1="52.6" y1="444.95" x2="659.0" y2="444.95" stroke="#00b0b8" stroke-width="1.8" stroke-dasharray="6,3,2,2.5,2,2.5"/><line x1="354.84" y1="362.6" x2="354.84" y2="540.6" stroke="#00b0b8" stroke-width="1.8" stroke-dasharray="6,3,2,2.5,2,2.5"/><text transform="translate(57.10,455.75) scale(1,1.28)" fill="#00c0c8" stroke="#00c0c8" stroke-width="0.1" font-family="Liberation Mono" font-size="9.6">0.72</text><text transform="translate(636.00,455.75) scale(1,1.28)" fill="#00c0c8" stroke="#00c0c8" stroke-width="0.1" font-family="Liberation Mono" font-size="9.6">0.72</text><text transform="translate(357.34,373.50) scale(1,1.38)" fill="#00c0c8" stroke="#00c0c8" stroke-width="0.1" font-family="Liberation Mono" font-size="9">161</text><text transform="translate(357.34,537.00) scale(1,1.38)" fill="#00c0c8" stroke="#00c0c8" stroke-width="0.1" font-family="Liberation Mono" font-size="9">161</text></g><g clip-path="url(#lc)" font-family="Liberation Sans" font-size="11.5" fill="#2a2a2a" stroke="#2a2a2a" stroke-width="0.2"><line x1="48.800000000000004" y1="376.74" x2="52.6" y2="376.74" stroke="#444" stroke-width="1.1"/><text transform="translate(48.40,380.74) scale(0.84,1)" text-anchor="end">8</text><line x1="48.800000000000004" y1="414.22" x2="52.6" y2="414.22" stroke="#444" stroke-width="1.1"/><text transform="translate(48.40,418.22) scale(0.84,1)" text-anchor="end">4</text><line x1="48.800000000000004" y1="451.70" x2="52.6" y2="451.70" stroke="#444" stroke-width="1.1"/><text transform="translate(48.40,455.70) scale(0.84,1)" text-anchor="end">0</text><line x1="48.800000000000004" y1="489.18" x2="52.6" y2="489.18" stroke="#444" stroke-width="1.1"/><text transform="translate(48.40,493.18) scale(0.84,1)" text-anchor="end">−4</text><line x1="48.800000000000004" y1="526.66" x2="52.6" y2="526.66" stroke="#444" stroke-width="1.1"/><text transform="translate(48.40,530.66) scale(0.84,1)" text-anchor="end">−8</text><line x1="52.80" y1="540.6" x2="52.80" y2="544.6" stroke="#444" stroke-width="1.3"/><text transform="translate(52.80,553.80) scale(0.8,1)" text-anchor="middle">0</text><line x1="127.84" y1="540.6" x2="127.84" y2="544.6" stroke="#444" stroke-width="1.3"/><text transform="translate(127.84,553.80) scale(0.8,1)" text-anchor="middle">40</text><line x1="202.88" y1="540.6" x2="202.88" y2="544.6" stroke="#444" stroke-width="1.3"/><text transform="translate(202.88,553.80) scale(0.8,1)" text-anchor="middle">80</text><line x1="277.92" y1="540.6" x2="277.92" y2="544.6" stroke="#444" stroke-width="1.3"/><text transform="translate(277.92,553.80) scale(0.8,1)" text-anchor="middle">120</text><line x1="352.96" y1="540.6" x2="352.96" y2="544.6" stroke="#444" stroke-width="1.3"/><text transform="translate(352.96,553.80) scale(0.8,1)" text-anchor="middle">160</text><line x1="428.00" y1="540.6" x2="428.00" y2="544.6" stroke="#444" stroke-width="1.3"/><text transform="translate(428.00,553.80) scale(0.8,1)" text-anchor="middle">200</text><line x1="503.04" y1="540.6" x2="503.04" y2="544.6" stroke="#444" stroke-width="1.3"/><text transform="translate(503.04,553.80) scale(0.8,1)" text-anchor="middle">240</text><line x1="578.08" y1="540.6" x2="578.08" y2="544.6" stroke="#444" stroke-width="1.3"/><text transform="translate(578.08,553.80) scale(0.8,1)" text-anchor="middle">280</text><line x1="653.12" y1="540.6" x2="653.12" y2="544.6" stroke="#444" stroke-width="1.3"/><text transform="translate(653.12,553.80) scale(0.8,1)" text-anchor="middle">320</text></g></svg>
<div class="btn" style="left:675px;top:357.5px;width:83px;height:20.5px;color:#1a1a1a;line-height:17.5px">启动校验</div>
<div class="btn" style="left:675px;top:391px;width:83px;height:20.5px;color:#1a1a1a;line-height:17.5px">重新统计</div>
<div class="btn" style="left:675px;top:425px;width:83px;height:20.5px;color:#1a1a1a;line-height:17.5px">导出<tt>EXCEL</tt>报表</div>
<div class="btn" style="left:676px;top:464.5px;width:81px;height:20.0px;color:#a0a0a0;line-height:17.0px">停止校验</div></body></html>
